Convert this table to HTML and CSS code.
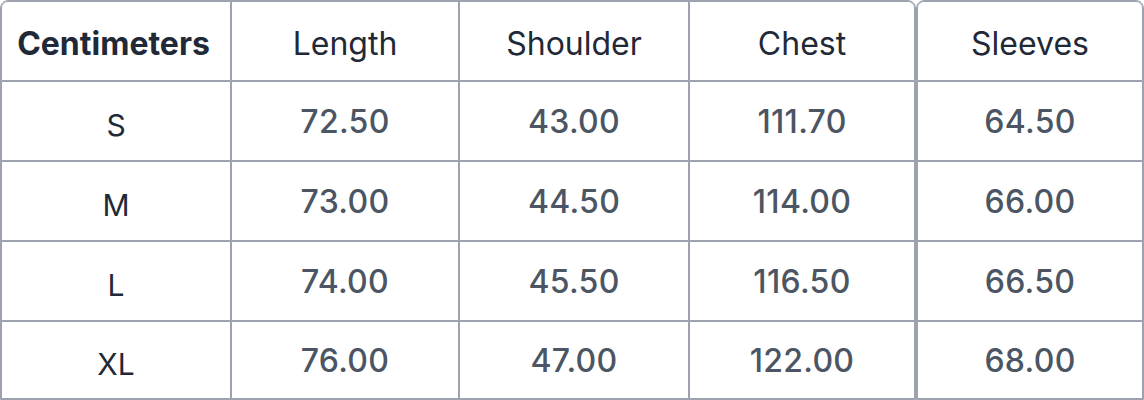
FILE: index.html
```html
<!DOCTYPE html>
<html>
<head>
<meta charset="utf-8">
<link rel="stylesheet" href="styles.css">
</head>
<body>
<div class="size-chart">
  <table class="chart main">
    <colgroup>
      <col class="c1"><col class="c2"><col class="c3"><col class="c4">
    </colgroup>
    <thead>
      <tr>
        <th class="unit">Centimeters</th>
        <th>Length</th>
        <th>Shoulder</th>
        <th>Chest</th>
      </tr>
    </thead>
    <tbody>
      <tr><td class="size">S</td><td>72.50</td><td>43.00</td><td>111.70</td></tr>
      <tr><td class="size">M</td><td>73.00</td><td>44.50</td><td>114.00</td></tr>
      <tr><td class="size">L</td><td>74.00</td><td>45.50</td><td>116.50</td></tr>
      <tr><td class="size">XL</td><td>76.00</td><td>47.00</td><td>122.00</td></tr>
    </tbody>
  </table>
  <table class="chart side">
    <thead>
      <tr><th>Sleeves</th></tr>
    </thead>
    <tbody>
      <tr><td>64.50</td></tr>
      <tr><td>66.00</td></tr>
      <tr><td>66.50</td></tr>
      <tr><td>68.00</td></tr>
    </tbody>
  </table>
</div>
</body>
</html>
```

FILE: styles.css
```css
html, body {
  margin: 0;
  padding: 0;
  background: #ffffff;
}

body {
  font-family: Inter, "Noto Sans", sans-serif;
}

.size-chart {
  display: flex;
  width: 1144px;
  height: 400px;
  overflow: hidden;
}

.chart {
  border-collapse: separate;
  border-spacing: 0;
  border: 1px solid #9ca3af;
  border-radius: 8px 8px 0 0;
  table-layout: fixed;
}

.main {
  width: 916px;
}

.side {
  width: 228px;
}

.c1 { width: 230px; }
.c2 { width: 228px; }
.c3 { width: 230px; }
.c4 { width: 226px; }

.chart th,
.chart td {
  border: 1px solid #9ca3af;
  height: 78px;
  padding: 0;
  box-sizing: content-box;
  text-align: center;
  vertical-align: middle;
}

.chart tr:first-child th:first-child {
  border-top-left-radius: 7px;
}

.chart tr:first-child th:last-child {
  border-top-right-radius: 7px;
}

.chart th {
  font-size: 32px;
  font-weight: 400;
  color: #1f2937;
  padding-top: 4px;
  height: 74px;
}

.chart th.unit {
  font-weight: 700;
  font-size: 32px;
  padding-right: 5px;
}

.chart td {
  font-size: 32px;
  font-weight: 500;
  color: #4b5563;
  letter-spacing: 0.3px;
}

.chart tbody tr:last-child td {
  height: 76px;
}

.chart td.size {
  font-size: 30px;
  font-weight: 400;
  color: #1f2937;
  letter-spacing: 0;
  padding-top: 7px;
  height: 71px;
}

.chart tbody tr:last-child td.size {
  height: 69px;
}
```
